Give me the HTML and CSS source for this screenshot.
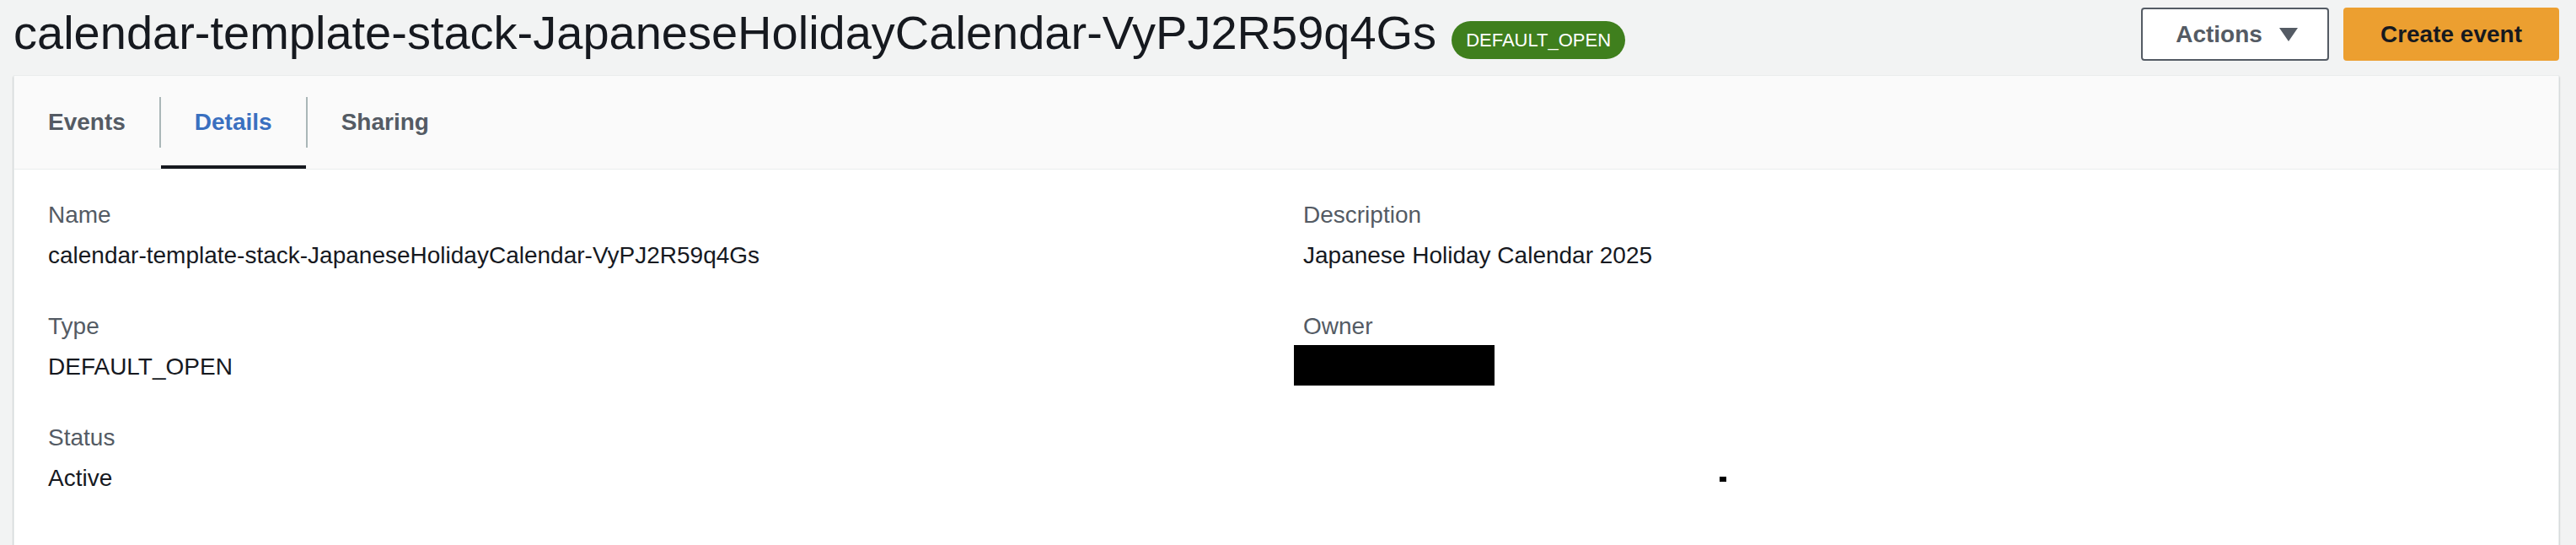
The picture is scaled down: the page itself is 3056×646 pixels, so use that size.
FILE: index.html
```html
<!DOCTYPE html>
<html lang="en">
<head>
<meta charset="utf-8">
<title>calendar-template-stack-JapaneseHolidayCalendar-VyPJ2R59q4Gs</title>
<link rel="stylesheet" href="styles.css">
</head>
<body>
<div class="page">
  <header class="header">
    <div class="title-group">
      <h1 class="title">calendar-template-stack-JapaneseHolidayCalendar-VyPJ2R59q4Gs</h1>
      <span class="badge">DEFAULT_OPEN</span>
    </div>
    <div class="actions">
      <button class="btn btn-secondary">Actions<svg class="caret" width="24" height="18" viewBox="0 0 24 18"><polygon points="1,1 23,1 12,17" fill="#545b64"/></svg></button>
      <button class="btn btn-primary">Create event</button>
    </div>
  </header>
  <section class="card">
    <nav class="tabs">
      <span class="tab">Events</span>
      <span class="tab-sep"></span>
      <span class="tab tab-active">Details</span>
      <span class="tab-sep"></span>
      <span class="tab">Sharing</span>
    </nav>
    <div class="content">
      <div class="col">
        <div class="kv">
          <div class="label">Name</div>
          <div class="value">calendar-template-stack-JapaneseHolidayCalendar-VyPJ2R59q4Gs</div>
        </div>
        <div class="kv">
          <div class="label">Type</div>
          <div class="value">DEFAULT_OPEN</div>
        </div>
        <div class="kv">
          <div class="label">Status</div>
          <div class="value">Active</div>
        </div>
      </div>
      <div class="col">
        <div class="kv">
          <div class="label">Description</div>
          <div class="value">Japanese Holiday Calendar 2025</div>
        </div>
        <div class="kv">
          <div class="label">Owner</div>
          <div class="value"><span class="redact"></span></div>
        </div>
        <div class="kv">
          <div class="label"></div>
          <div class="value"><span class="mark"></span></div>
        </div>
      </div>
    </div>
  </section>
</div>
</body>
</html>
```
FILE: styles.css
```css
* { box-sizing: border-box; }
html, body {
  margin: 0;
  background: #f2f3f3;
  font-family: "Liberation Sans", Arial, sans-serif;
  color: #16191f;
}
.page {
  padding: 4px 20px 0 16px;
}
.header {
  display: flex;
  justify-content: space-between;
  align-items: flex-start;
  height: 85px;
}
.title-group {
  display: flex;
  align-items: flex-start;
}
.title {
  margin: 0;
  font-size: 56px;
  line-height: 70px;
  font-weight: 400;
  color: #16191f;
  white-space: nowrap;
}
.badge {
  margin-left: 18px;
  margin-top: 21px;
  height: 45px;
  padding: 0 17px;
  border-radius: 23px;
  background: #3f7f1d;
  color: #ffffff;
  font-size: 22px;
  line-height: 45px;
  white-space: nowrap;
}
.actions {
  display: flex;
  gap: 17px;
  margin-top: 5px;
}
.btn {
  display: flex;
  align-items: center;
  height: 63px;
  border: 2px solid;
  border-radius: 4px;
  font-family: "Liberation Sans", Arial, sans-serif;
  font-size: 28px;
  font-weight: 700;
  padding: 0 42px;
  cursor: pointer;
}
.btn-secondary {
  background: #ffffff;
  border-color: #545b64;
  color: #545b64;
  padding: 0 34px 0 39px;
}
.caret {
  margin-left: 19px;
  display: block;
}
.btn-primary {
  background: #ec9f30;
  border-color: #ec9f30;
  color: #16191f;
}
.card {
  background: #ffffff;
  border: 1px solid #eaeded;
  box-shadow: 0 2px 2px rgba(0, 28, 36, 0.35);
}
.tabs {
  display: flex;
  align-items: stretch;
  height: 111px;
  background: #fafafa;
  border-bottom: 1px solid #eaeded;
}
.tab {
  display: flex;
  align-items: center;
  padding: 0 40px;
  font-size: 28px;
  line-height: 44px;
  font-weight: 700;
  color: #545b64;
  white-space: nowrap;
}
.tab-active {
  color: #3a70c0;
  box-shadow: inset 0 -4px 0 #16191f;
}
.tab-sep {
  align-self: center;
  width: 2px;
  height: 60px;
  background: #aab7b8;
}
.content {
  display: grid;
  grid-template-columns: 1fr 1fr;
  column-gap: 40px;
  padding: 32px 40px 42px;
}
.col {
  display: flex;
  flex-direction: column;
  gap: 40px;
}
.label {
  height: 44px;
  font-size: 28px;
  line-height: 44px;
  color: #545b64;
  margin-bottom: 4px;
}
.value {
  height: 44px;
  font-size: 28px;
  line-height: 44px;
  color: #16191f;
  white-space: nowrap;
}
.redact {
  display: block;
  width: 238px;
  height: 48px;
  margin: -4px 0 0 -11px;
  background: #000000;
}
.mark {
  display: block;
  width: 8px;
  height: 6px;
  margin: 28px 0 0 494px;
  background: #000000;
}
```
